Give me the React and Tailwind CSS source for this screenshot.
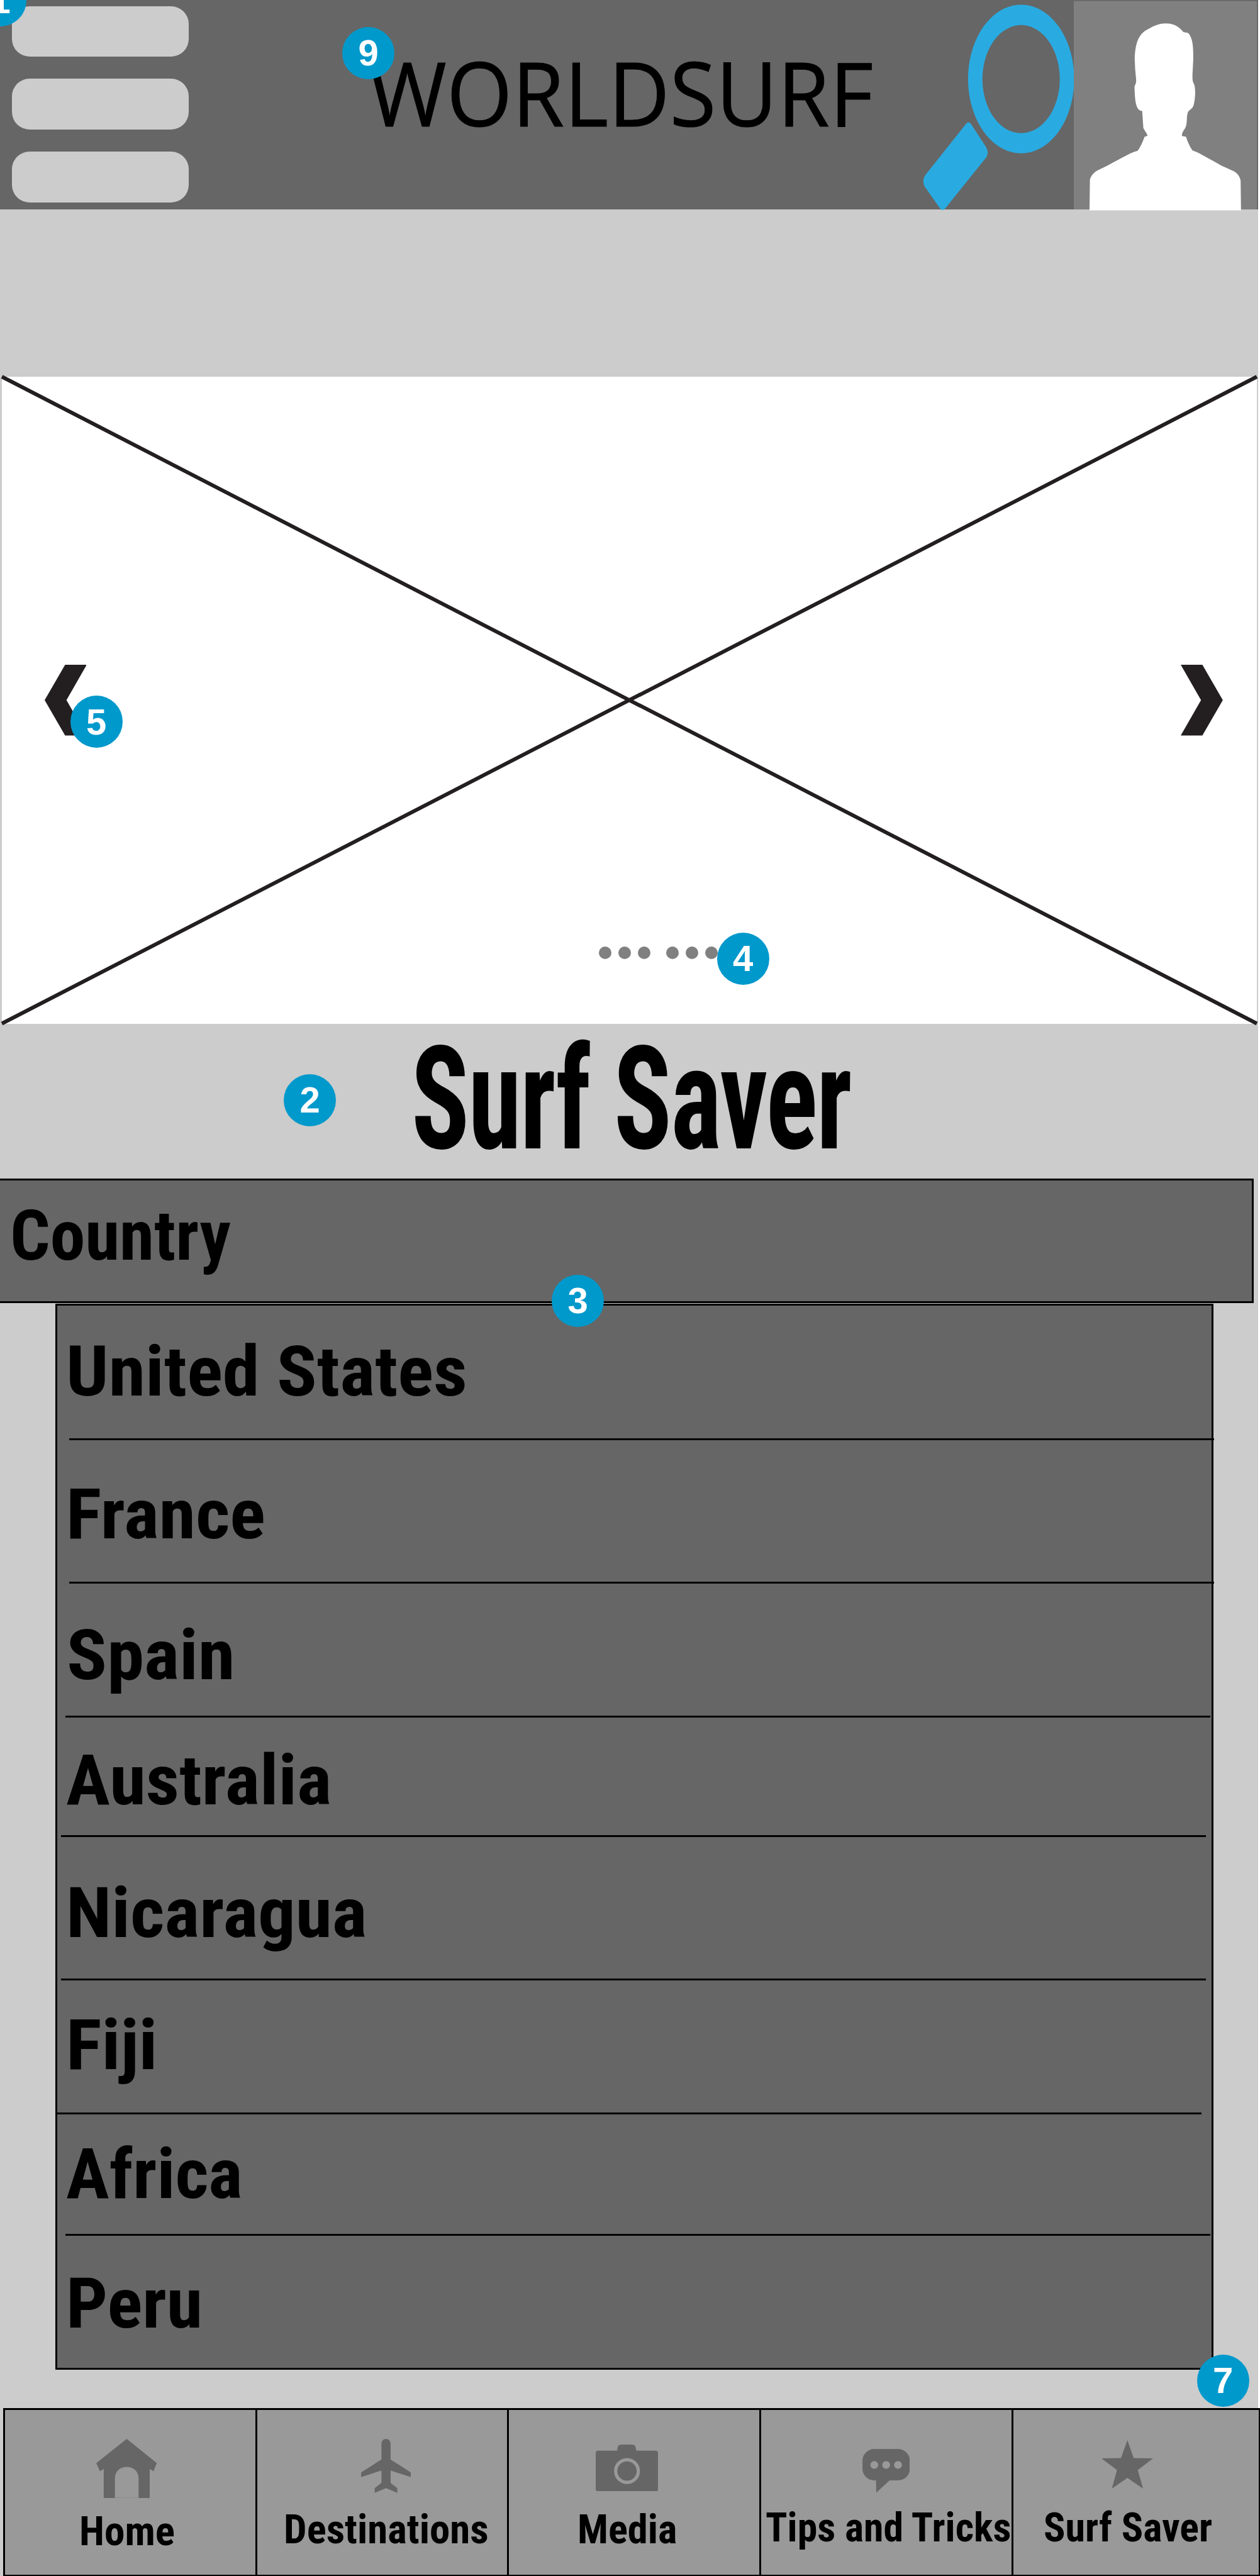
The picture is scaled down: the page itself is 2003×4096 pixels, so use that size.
import React from "react";

const label = "block origin-left whitespace-nowrap leading-none font-bold text-black font-['Roboto_Condensed',Roboto,sans-serif]";

const countries = [
  { name: "United States", row: "h-[214px] pt-[49.2px]", scale: "ml-[14px] scale-x-[1.058]", line: "ml-[19px]" },
  { name: "France", row: "h-[228px] pt-[61.7px]", scale: "ml-[14px] scale-x-[1.055]", line: "ml-[19px]" },
  { name: "Spain", row: "h-[212.5px] pt-[58.1px]", scale: "ml-[15px] scale-x-[1.062]", line: "ml-[13px]" },
  { name: "Australia", row: "h-[190.5px] pt-[44.7px]", scale: "ml-[14px] scale-x-[1.045]", line: "ml-[6px]" },
  { name: "Nicaragua", row: "h-[228px] pt-[65.1px]", scale: "ml-[14px] scale-x-[1.055]", line: "ml-[6px]" },
  { name: "Fiji", row: "h-[212.5px] pt-[47.3px]", scale: "ml-[14px] scale-x-[1.06]", line: "-ml-px" },
  { name: "Africa", row: "h-[193.5px] pt-[39px]", scale: "ml-[14px] scale-x-[1.027]", line: "ml-[13px]" },
  { name: "Peru", row: "h-[210px] pt-[52.1px]", scale: "ml-[14px] scale-x-[1.04]", line: null },
];

const markers = [
  { n: 1, at: "left-[-41px] top-[-41px]" },
  { n: 9, at: "left-[544px] top-[42.5px]" },
  { n: 5, at: "left-[111.5px] top-[1106px]" },
  { n: 4, at: "left-[1139.5px] top-[1482.5px]" },
  { n: 2, at: "left-[451px] top-[1707.5px]" },
  { n: 3, at: "left-[877px] top-[2026.5px]" },
  { n: 7, at: "left-[1902.5px] top-[3743.5px]" },
];

function HomeIcon() {
  return (
    <svg viewBox="0 0 102.8 100.4" className="ml-[145px] mt-[46px] h-[94px] w-[96.4px] shrink-0" fill="#666">
      <path d="M51.7 0 102.8 41 97 55 90.7 50.7V100.4H71.8V66C71.4 54 62 47.4 51.7 47.4S32 54 31.6 66V100.4H12.6V50.7L6.3 55 0 41Z" />
      <path d="M31 99.8H72" stroke="#8a8a8a" strokeWidth="1" />
    </svg>
  );
}

function PlaneIcon() {
  return (
    <svg viewBox="0 0 84.6 92" className="ml-[165px] mt-[46px] h-[86px] w-[79.3px] shrink-0" fill="#666">
      <path d="M42.3 0C46.5 0 50.1 3.4 50.1 8V35L84.6 57V65L50.1 53.7V75L61.5 83.7V91.7L42.3 83.7 23.1 91.7V83.7L34.5 75V53.7L0 65V57L34.5 35V8C34.5 3.4 38.1 0 42.3 0Z" />
    </svg>
  );
}

function CameraIcon() {
  return (
    <svg viewBox="0 0 105.7 79.6" className="ml-[138.3px] mt-[54.7px] h-[74.6px] w-[99px] shrink-0" fill="#666">
      <path d="M4 10.3H36.2L37.5 4C38 1.5 39.5 .5 42 .3Q53 -.5 63 .3C65.5 .5 67 1.5 67.5 4L69 10.3H101.7A4 4 0 0 1 105.7 14.3V75.6A4 4 0 0 1 101.7 79.6H4A4 4 0 0 1 0 75.6V14.3A4 4 0 0 1 4 10.3Z" />
      <circle cx="53.1" cy="45" r="19.2" stroke="#999" strokeWidth="5.6" />
    </svg>
  );
}

function ChatIcon() {
  return (
    <svg viewBox="0 0 80.4 74" className="ml-[160.8px] mt-[62.2px] h-[69.4px] w-[75.4px] shrink-0" fill="#666">
      <path d="M20 0H60.4A20 20 0 0 1 80.4 20V33.3A20 20 0 0 1 60.4 53.3H46L23.5 74 23 53.3H20A20 20 0 0 1 0 33.3V20A20 20 0 0 1 20 0Z" />
      <g fill="#999">
        <circle cx="20.1" cy="27" r="6.6" />
        <circle cx="40.2" cy="27" r="6.6" />
        <circle cx="60.3" cy="27" r="6.6" />
      </g>
    </svg>
  );
}

function StarIcon() {
  return (
    <svg viewBox="0 0 87.6 82.3" className="ml-[139.6px] mt-[47.5px] h-[77.1px] w-[82.1px] shrink-0" fill="#666">
      <path d="M44 0 54.6 30.3 87.6 31 61.6 50.7 70.6 82.3 44 64 17.6 82.3 26.3 50.7 0 31 33 30.3Z" />
    </svg>
  );
}

const tabs = [
  { name: "Home", Icon: HomeIcon, cell: "w-[401px] border-l-3", text: "ml-[118px] mt-[20px] scale-x-[0.995]" },
  { name: "Destinations", Icon: PlaneIcon, cell: "w-[400px] border-l-3", text: "ml-[42px] mt-[25px] scale-x-[0.99]" },
  { name: "Media", Icon: CameraIcon, cell: "w-[401px] border-l-3", text: "ml-[109.4px] mt-[27.7px] scale-x-[0.985]" },
  { name: "Tips and Tricks", Icon: ChatIcon, cell: "w-[401px] border-l-3", text: "ml-[6.5px] mt-[22.7px] scale-x-[0.974]" },
  { name: "Surf Saver", Icon: StarIcon, cell: "w-[395px] border-l-3 border-r-2", text: "ml-[47.6px] mt-[29.4px] scale-x-[0.978]" },
];

function Header() {
  return (
    <header className="flex h-[333px] w-full shrink-0 items-start bg-[#666]">
      <button className="ml-[19px] mt-[9.5px] flex w-[281px] flex-col gap-[35.4px]" aria-label="Menu">
        <span className="h-[80.6px] rounded-[28px] bg-[#ccc]" />
        <span className="h-[80.6px] rounded-[28px] bg-[#ccc]" />
        <span className="h-[80.6px] rounded-[28px] bg-[#ccc]" />
      </button>
      <h1 className="ml-[286px] mt-[75.5px] w-[881px] shrink-0 origin-left scale-x-[0.9466] whitespace-nowrap font-['Open_Sans',sans-serif] text-[141.8px] leading-none text-black [-webkit-text-stroke:1px_#000]">
        WORLDSURF
      </h1>
      <svg viewBox="1565 0 257 358" className="h-[335.6px] w-[240.9px] shrink-0" fill="#29abe2">
        <path fillRule="evenodd" d="M1731.7 8a90 126 0 1 0 .01 0ZM1731.7 42.5a65.6 91.7 0 1 1 -.01 0Z" />
        <path d="M1638 210.5Q1642.5 204.5 1646.9 210.5L1672 249Q1677.5 258 1673 266.4L1602.6 354Q1598.5 358.5 1594.6 354L1567.8 316Q1563.5 307 1568.5 298Z" />
      </svg>
      <svg viewBox="63 0 938 1074" className="-ml-[0.9px] h-[335.6px] w-[293px] shrink-0">
        <rect x="63" y="5" width="932" height="1061" fill="#808080" />
        <path
          fill="#fff"
          d="M143 1071 145 915C150 895 165 875 190 864L230 845Q290 812 352 780 370 772 388 767C402 750 414 720 423 696L438 691C436 677 424 667 417 651L411 565C388 563 379 540 375 500Q372 465 372 441C376 428 382 425 380 402Q374 350 373 300C375 230 388 180 430 154 465 135 490 119 532 119 580 119 600 140 621 163 632 166 640 164 648 170 670 200 671 240 671 300L667 380C666 425 672 415 678 438 683 465 680 500 676 520 672 555 655 555 645 568 635 590 642 620 633 645 624 665 614 670 613 692L634 696C642 720 652 745 667 766Q685 772 700 779 765 815 815 843 850 858 880 873C900 885 910 905 912 920L914 1071Z"
        />
      </svg>
    </header>
  );
}

function Dots() {
  return (
    <div className="flex gap-[11px]">
      <span className="size-[20px] rounded-full bg-[#808080]" />
      <span className="size-[20px] rounded-full bg-[#808080]" />
      <span className="size-[20px] rounded-full bg-[#808080]" />
    </div>
  );
}

function Carousel() {
  return (
    <section className="relative ml-[3px] mt-[266px] flex h-[1028.5px] w-[1995px] shrink-0 items-center justify-between bg-white pl-[67.6px] pr-[54px]">
      <svg className="absolute inset-0 size-full overflow-visible" viewBox="0 0 1995 1028.5" stroke="#231f20" strokeWidth="6">
        <path d="M0 0 1995 1028.5M1995 0 0 1028.5" />
      </svg>
      <svg viewBox="0 0 71.4 120" className="relative h-[112.5px] w-[66.9px]" fill="#231f20">
        <path d="M34.7 0H71.4L37 60 71.4 120H34.7L0 60Z" />
      </svg>
      <svg viewBox="0 0 71.4 120" className="relative h-[112.5px] w-[66.9px]" fill="#231f20">
        <path d="M36.7 0H0L34.4 60 0 120H36.7L71.4 60Z" />
      </svg>
      <div className="absolute bottom-[103px] left-[949px] flex gap-[24.5px]">
        <Dots />
        <Dots />
      </div>
    </section>
  );
}

export default function App() {
  return (
    <div className="relative flex h-[4096px] w-[2003px] flex-col overflow-hidden bg-white">
      <main className="flex h-[3829px] w-[2000px] shrink-0 flex-col bg-[#ccc]">
        <Header />
        <Carousel />
        <div className="h-[246px] shrink-0 pl-[654px] pt-[6px]">
          <h2 className={label + " w-[950px] scale-x-[0.747] text-[229px] tracking-[-0.01em]"}>Surf Saver</h2>
        </div>
        <div className="h-[198.5px] w-[1993px] shrink-0 border-y-3 border-r-3 border-black bg-[#666] pl-[15.5px] pt-[32.4px]">
          <span className={label + " w-[400px] scale-x-[0.997] text-[112px]"}>Country</span>
        </div>
        <ul className="ml-[88px] mt-px h-[1695px] w-[1840.5px] shrink-0 border-3 border-black bg-[#666]">
          {countries.map((c) => (
            <li key={c.name} className={"flex flex-col justify-between " + c.row}>
              <span className={label + " w-fit text-[112px] " + c.scale}>{c.name}</span>
              {c.line && <span className={"h-[3px] w-[1820px] bg-black " + c.line} />}
            </li>
          ))}
        </ul>
      </main>

      <nav className="flex h-[267px] shrink-0">
        <div className="w-[5px] bg-[#ccc]" />
        {tabs.map(({ name, Icon, cell, text }) => (
          <a key={name} className={"flex shrink-0 flex-col items-start border-t-3 border-b-2 border-black bg-[#999] " + cell}>
            <Icon />
            <span className={label + " text-[65.5px] " + text}>{name}</span>
          </a>
        ))}
      </nav>

      {markers.map((m) => (
        <div
          key={m.n}
          className={"absolute flex size-[83.4px] items-center justify-center rounded-full bg-[#0099cc] font-['Liberation_Sans',sans-serif] text-[58px] font-bold leading-none text-white " + m.at}
        >
          {m.n}
        </div>
      ))}
    </div>
  );
}
